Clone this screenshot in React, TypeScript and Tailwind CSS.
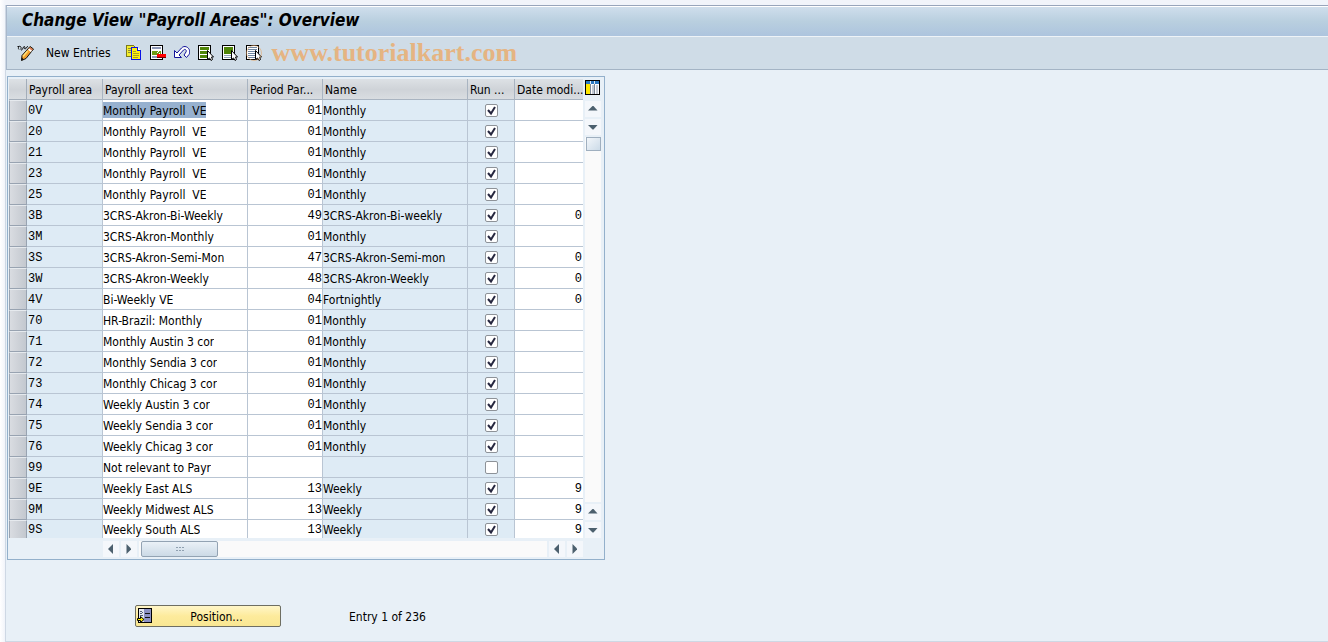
import type { ReactNode } from 'react';

type Row = {
  area: string;
  text: string;
  period: string;
  name: string;
  run: boolean;
  date: string;
};

const row = (area: string, text: string, period = '01', name = 'Monthly', date = '', run = true): Row => ({
  area,
  text,
  period,
  name,
  run,
  date,
});

const rows: Row[] = [
  row('0V', 'Monthly Payroll  VE'),
  row('20', 'Monthly Payroll  VE'),
  row('21', 'Monthly Payroll  VE'),
  row('23', 'Monthly Payroll  VE'),
  row('25', 'Monthly Payroll  VE'),
  row('3B', '3CRS-Akron-Bi-Weekly', '49', '3CRS-Akron-Bi-weekly', '0'),
  row('3M', '3CRS-Akron-Monthly'),
  row('3S', '3CRS-Akron-Semi-Mon', '47', '3CRS-Akron-Semi-mon', '0'),
  row('3W', '3CRS-Akron-Weekly', '48', '3CRS-Akron-Weekly', '0'),
  row('4V', 'Bi-Weekly VE', '04', 'Fortnightly', '0'),
  row('70', 'HR-Brazil: Monthly'),
  row('71', 'Monthly Austin 3 cor'),
  row('72', 'Monthly Sendia 3 cor'),
  row('73', 'Monthly Chicag 3 cor'),
  row('74', 'Weekly Austin 3 cor'),
  row('75', 'Weekly Sendia 3 cor'),
  row('76', 'Weekly Chicag 3 cor'),
  row('99', 'Not relevant to Payr', '', '', '', false),
  row('9E', 'Weekly East ALS', '13', 'Weekly', '9'),
  row('9M', 'Weekly Midwest ALS', '13', 'Weekly', '9'),
  row('9S', 'Weekly South ALS', '13', 'Weekly', '9'),
];

const headers = ['Payroll area', 'Payroll area text', 'Period Par...', 'Name', 'Run ...', 'Date modi...'];

const cell = 'h-full border-r border-b border-[#b9c5d3] p-0';
const mono = "font-['Liberation_Mono',monospace] text-[12px]";

/* Toolbar icons */

function Pixels({ children, w = 16, h = 16 }: { children: ReactNode; w?: number; h?: number }) {
  return (
    <svg width={w} height={h} viewBox={`0 0 ${w} ${h}`} shapeRendering="crispEdges" aria-hidden="true">
      {children}
    </svg>
  );
}

function Pointer() {
  return (
    <path
      d="M9.500 5.500v9l2-1.500 1.500 2.500 1.500-1-1-2.500h2z"
      fill="#fff"
      stroke="#000"
      strokeWidth="1"
      shapeRendering="auto"
    />
  );
}

function ChangeIcon() {
  return (
    <svg width="18" height="16" viewBox="0 0 18 16" aria-hidden="true">
      <path d="M.5 1.500h1.500M2 4.500C.5 3 2 .5 3.500 1.500S3 5 4.500 5 6 1 7.500 1.500 6.500 4 8 4s1-2.500 3-2.500" fill="none" stroke="#111" />
      <path d="M13 1.500l3.500 2.500-7.500 9.500-4.500 2 .5-5z" fill="#f6a12c" stroke="#111" />
      <path d="M12.200 3.300l2.900 2.200-1.200 1.500-2.900-2.200z" fill="#fff" />
      <path d="M13.200 2.200l2.700 2-1 1.200-2.700-2z" fill="#d97a5a" />
      <path d="M10.500 6l-4.500 5.500" stroke="#ffe27a" strokeWidth="1.500" fill="none" />
      <path d="M4.500 15.500l.3-3 2 1.800z" fill="#111" />
    </svg>
  );
}

function CopyIcon() {
  return (
    <Pixels>
      <path d="M.5.5h7l2 2v9h-9z" fill="#f5ee2b" stroke="#7c7a1c" />
      <path d="M2 3.500h3M2 5.500h3M2 7.500h3" stroke="#8c8a3c" />
      <path d="M5.500 2.500h6l3 3v9h-9z" fill="#ffef10" stroke="#0a12e6" />
      <path d="M11.500 2.500v3h3" fill="#fff" stroke="#0a12e6" />
      <path d="M7 6.500h3M7 8.500h6M7 10.500h6M7 12.500h5" stroke="#a8a020" />
    </Pixels>
  );
}

function DeleteIcon() {
  return (
    <Pixels>
      <path d="M.5.5h12v14H.5z" fill="#fff" stroke="#000" />
      <path d="M2.500 2.500h8v1h-8zM2.500 11.500h8v1h-8z" fill="#fff" stroke="#8d98b8" />
      <path d="M2 6h9v4H2z" fill="#6d9b12" />
      <path d="M8 6h1v1H8zM7 7h1v1H7zM9 8h1v1H9z" fill="#fff" />
      <path d="M7 9h9v4H7z" fill="#f00" />
      <path d="M7 12h9v1H7z" fill="#700" />
    </Pixels>
  );
}

function UndoIcon() {
  return (
    <svg width="16" height="16" viewBox="0 0 16 16" aria-hidden="true">
      <path
        d="M.5 5.500v7h7l-2.500-2.500 4.500-5c1.500-1.500 3.500 0 2.500 2l-2 3 2.500 2.500 2.500-3c2-3 0-7.500-4-8-1.500 0-2.500.5-3.500 1.500l-4.500 5z"
        fill="#fff"
        stroke="#13139a"
      />
    </svg>
  );
}

function SelectAllIcon() {
  return (
    <Pixels>
      <path d="M.5.5h12v14H.5z" fill="#fff" stroke="#000" />
      <path d="M2 2h9v3H2zM2 6h9v3H2zM2 10h9v3H2z" fill="#4f8508" />
      <Pointer />
    </Pixels>
  );
}

function SelectBlockIcon() {
  return (
    <Pixels>
      <path d="M.5.5h12v14H.5z" fill="#fff" stroke="#000" />
      <path d="M2 2h9v7H2z" fill="#4f8508" />
      <path d="M2 10.500h9M2 12.500h9" stroke="#8fa3b8" />
      <Pointer />
    </Pixels>
  );
}

function DeselectIcon() {
  return (
    <Pixels>
      <path d="M.5.5h12v14H.5z" fill="#fff" stroke="#000" />
      <path d="M2 2.500h9M2 4.500h9M2 6.500h9M2 8.500h9M2 10.500h9M2 12.500h9" stroke="#6f86a0" />
      <Pointer />
    </Pixels>
  );
}

function ColumnsIcon() {
  return (
    <Pixels>
      <path d="M.5.5h14v14H.5z" fill="#fff" stroke="#000" />
      <path d="M1 1h13v3H1z" fill="#2a78c2" />
      <path d="M1 4h4v10H1z" fill="#ffe600" />
      <path d="M7 5h2v9H7zM11 5h2v9h-2z" fill="#c3cad4" />
      <path d="M5.500 4v10M9.500 4v10" stroke="#7a8798" />
      <path d="M5.500 1v3M9.500 1v3" stroke="#dfeaf5" />
    </Pixels>
  );
}

function PositionIcon() {
  return (
    <Pixels>
      <path d="M1.500.5h13v14h-13z" fill="#e4e8f2" stroke="#000" />
      <path d="M7 1h7v13H7z" fill="#8b90c4" />
      <path d="M3 3h2v1H3zM5 4h1v1H5zM3 5h2v1H3zM3 7h3v1H3z" fill="#55607a" />
      <path d="M8 5h5v1H8zM8 9h5v1H8z" fill="#111" />
      <path d="M.5 10.500h3v-2l3.500 3-3.500 3v-2h-3z" fill="#ffee00" stroke="#000" shapeRendering="auto" />
    </Pixels>
  );
}

const tools = [
  { label: 'Copy As', icon: <CopyIcon /> },
  { label: 'Delete', icon: <DeleteIcon /> },
  { label: 'Undo Change', icon: <UndoIcon /> },
  { label: 'Select All', icon: <SelectAllIcon /> },
  { label: 'Select Block', icon: <SelectBlockIcon /> },
];

/* Scroll bars */

const arrows = {
  up: 'M3 9.500h9.500L8.500 5h-1z',
  down: 'M3 6h9.500l-4 4.500h-1z',
  left: 'M10 3v10L5.500 8.500v-1z',
  right: 'M5.500 3v10L10 8.500v-1z',
};

function Arrow({ dir }: { dir: keyof typeof arrows }) {
  return (
    <button type="button" aria-label={`Scroll ${dir}`} className="block size-4 shrink-0 bg-[#f4f7fb]">
      <svg viewBox="0 0 16 16" className="size-4" aria-hidden="true">
        <path d={arrows[dir]} fill="#4c606e" />
      </svg>
    </button>
  );
}

function VerticalScroll() {
  return (
    <div className="ml-[2px] flex w-4 shrink-0 flex-col gap-[2px] pt-px">
      <button type="button" aria-label="Table settings" className="mb-[3px] block h-4 w-4">
        <ColumnsIcon />
      </button>
      <Arrow dir="up" />
      <Arrow dir="down" />
      <div className="flex-1 bg-[#fafafa]">
        <div className="ml-px h-[14px] border border-[#9fafbf] bg-linear-to-br from-[#f2f6fa] to-[#ccdbe8]" />
      </div>
      <Arrow dir="up" />
      <Arrow dir="down" />
    </div>
  );
}

function HorizontalScroll() {
  return (
    <div className="mt-[3px] flex h-4 gap-[2px] pr-[18px] pl-[94px]">
      <Arrow dir="left" />
      <Arrow dir="right" />
      <div className="flex-1 bg-[#fafafa] pl-[2px]">
        <div className="flex h-4 w-[77px] items-center justify-center rounded-xs border border-[#93a3b3] bg-linear-to-b from-[#eaf1f7] to-[#ccdae6]">
          <svg width="8" height="5" viewBox="0 0 8 5" shapeRendering="crispEdges" aria-hidden="true">
            <path d="M0 .5h2M3 .5h2M6 .5h2M0 3.500h2M3 3.500h2M6 3.500h2" stroke="#8fa0b0" />
          </svg>
        </div>
      </div>
      <Arrow dir="left" />
      <Arrow dir="right" />
    </div>
  );
}

function Tick({ checked, label }: { checked: boolean; label: string }) {
  return (
    <span className="relative mx-auto block size-[13px]">
      <input
        type="checkbox"
        defaultChecked={checked}
        aria-label={label}
        className="peer block size-[13px] appearance-none rounded-xs border border-[#8d9298] bg-white"
      />
      <svg
        viewBox="0 0 13 13"
        className="pointer-events-none absolute inset-0 hidden size-[13px] peer-checked:block"
        aria-hidden="true"
      >
        <path d="M3 6l3 3.500L10 3" fill="none" stroke="#26273f" strokeWidth="2" />
      </svg>
    </span>
  );
}

function PayrollTable() {
  return (
    <table className="w-[574px] table-fixed border-separate border-spacing-0">
      <colgroup>
        <col className="w-[18px]" />
        <col className="w-[76px]" />
        <col className="w-[145px]" />
        <col className="w-[75px]" />
        <col className="w-[145px]" />
        <col className="w-[47px]" />
        <col className="w-[68px]" />
      </colgroup>
      <thead>
        <tr className="h-[21px] bg-linear-to-b from-[#dde1e5] via-[#cfd3d8] to-[#dadee2]">
          <th aria-label="Select" className="border-r border-b border-[#a3adb9] p-0" />
          {headers.map((h) => (
            <th
              key={h}
              scope="col"
              className="border-r border-b border-[#a9b4c1] pt-[2px] pr-0 pb-0 pl-[2px] text-left font-normal whitespace-nowrap last:border-r-0"
            >
              {h}
            </th>
          ))}
        </tr>
      </thead>
      <tbody>
        {rows.map((r, i) => (
          <tr key={r.area} className="h-[21px] last:h-[18px] last:*:border-b-0">
            <td className="border border-t-[#e6eaee] border-r-[#98a3b1] border-b-[#98a3b1] border-l-[#98a3b1] bg-linear-to-r from-[#d9dce1] to-[#c3c8cf] p-0" />
            <td className={`${cell} ${mono} bg-[#deebf5] pt-[2px] pl-px`}>{r.area}</td>
            <td className={`${cell} bg-white`}>
              <input
                defaultValue={r.text}
                aria-label={`Payroll area text ${r.area}`}
                className={`block h-4 max-w-full field-sizing-content pt-px ${i === 0 ? 'bg-[#97b1cf]' : ''}`}
              />
            </td>
            <td className={`${cell} bg-white`}>
              <input
                defaultValue={r.period}
                aria-label={`Period parameter ${r.area}`}
                className={`block h-4 w-full pt-[2px] text-right ${mono}`}
              />
            </td>
            <td className={`${cell} bg-[#deebf5] pt-[2px] whitespace-nowrap`}>{r.name}</td>
            <td className={`${cell} bg-[#deebf5]`}>
              <Tick checked={r.run} label={`Run payroll ${r.area}`} />
            </td>
            <td className="border-b border-[#b9c5d3] bg-white p-0">
              <input
                defaultValue={r.date}
                aria-label={`Date modifier ${r.area}`}
                className={`block h-4 w-full pt-[2px] pr-px text-right ${mono}`}
              />
            </td>
          </tr>
        ))}
      </tbody>
    </table>
  );
}

export default function App() {
  return (
    <div className="flex min-h-screen flex-col bg-linear-to-r from-white to-[#f1f4fa] to-[5px] pt-[5px] pl-[5px] font-['DejaVu_Sans_Condensed','DejaVu_Sans',sans-serif] text-[12px] leading-[14px] text-black">
      <div className="flex flex-1 flex-col border-b border-l border-[#ced8e4] bg-[#e8f0f7]">
        <header className="border-t border-b border-l border-t-[#98a5bb] border-b-[#a4b4c5] border-l-[#a9b8cb]">
          <h1 className="flex h-[30px] items-center border-t border-white bg-linear-to-b from-[#cfdeec] via-[#b9cfdf] to-[#adc4de] pb-[4px] pl-[15px] text-[17px] leading-5 font-bold italic">
            Change View "Payroll Areas": Overview
          </h1>
          <div
            role="toolbar"
            aria-label="Table view"
            className="flex h-[33px] items-center border-t border-[#eef3f7] bg-[#cfdce7] pb-px pl-[10px]"
          >
            <button type="button" aria-label="Display/Change">
              <ChangeIcon />
            </button>
            <button type="button" className="ml-[11px] whitespace-nowrap">
              New Entries
            </button>
            <div className="ml-[15px] flex items-center gap-2">
              {tools.map((t) => (
                <button key={t.label} type="button" aria-label={t.label}>
                  {t.icon}
                </button>
              ))}
              <button type="button" aria-label="Deselect All" className="relative">
                <DeselectIcon />
                <span className="absolute inset-0 rounded-full border border-[#e5a86a]/60" />
              </button>
            </div>
            <span className="ml-[10px] font-['Liberation_Serif',serif] text-[26px] leading-8 font-bold text-[#e5b482]">
              www.tutorialkart.com
            </span>
          </div>
        </header>

        <main className="pt-[6px] pl-px">
          <section aria-label="Payroll areas" className="w-fit border border-[#93b0cb] pt-[2px] pr-[3px] pb-[2px] pl-px">
            <div className="flex">
              <PayrollTable />
              <VerticalScroll />
            </div>
            <HorizontalScroll />
          </section>

          <div className="mt-[45px] ml-32 flex items-center">
            <button
              type="button"
              className="flex h-[22px] w-[146px] items-center rounded-xs border border-[#6e6e62] bg-linear-to-b from-[#fff6c8] via-[#fdeb9c] to-[#f9e793] pl-px"
            >
              <PositionIcon />
              <span className="flex-1 pt-px text-center">Position...</span>
            </button>
            <span className="ml-[68px] pt-[2px]">Entry 1 of 236</span>
          </div>
        </main>
      </div>
    </div>
  );
}
